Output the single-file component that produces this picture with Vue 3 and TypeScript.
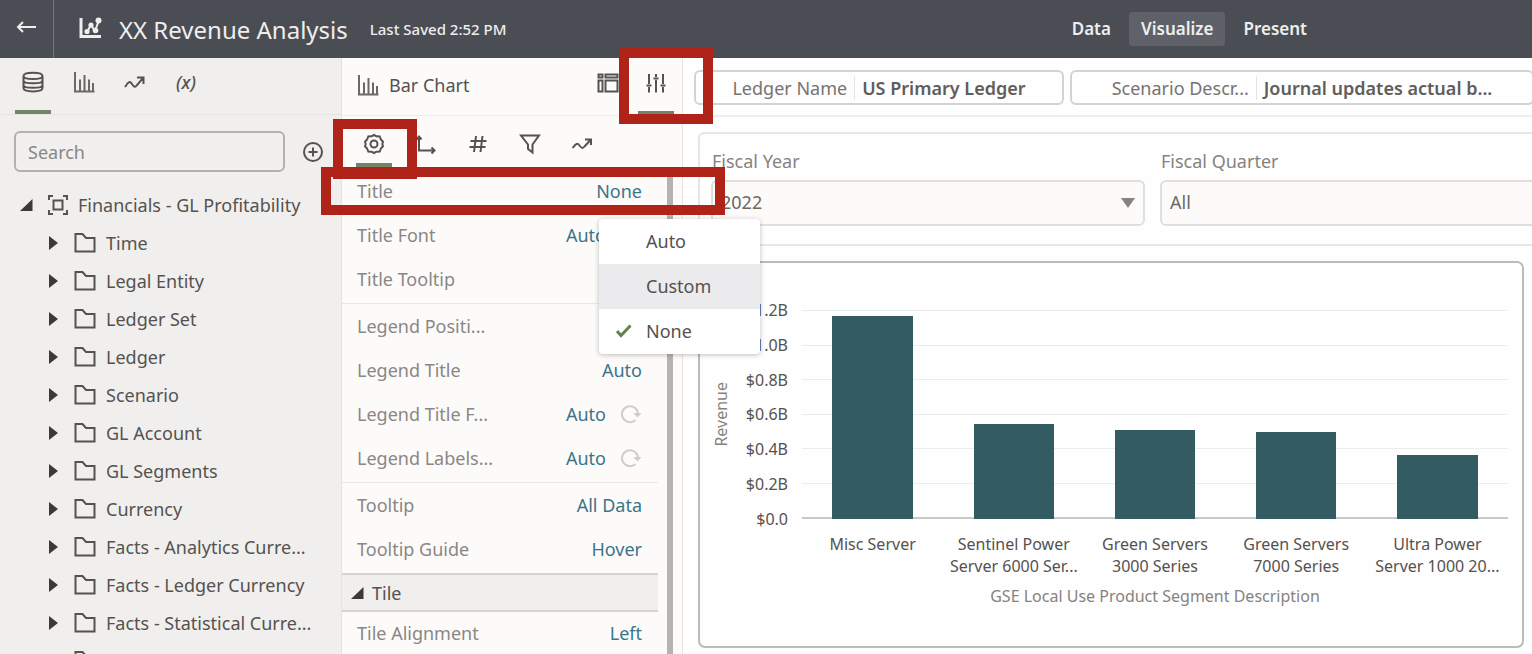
<script setup lang="ts">
import { ref } from 'vue'

interface Property {
  label: string
  value?: string
  reset?: boolean
}

interface Bar {
  name: string[]
  value: number
}

const folders: string[] = [
  'Time',
  'Legal Entity',
  'Ledger Set',
  'Ledger',
  'Scenario',
  'GL Account',
  'GL Segments',
  'Currency',
  'Facts - Analytics Curre...',
  'Facts - Ledger Currency',
  'Facts - Statistical Curre...',
  '',
]

const groups: Property[][] = [
  [
    { label: 'Title', value: 'None' },
    { label: 'Title Font', value: 'Auto', reset: true },
    { label: 'Title Tooltip' },
  ],
  [
    { label: 'Legend Positi...' },
    { label: 'Legend Title', value: 'Auto' },
    { label: 'Legend Title F...', value: 'Auto', reset: true },
    { label: 'Legend Labels...', value: 'Auto', reset: true },
  ],
  [
    { label: 'Tooltip', value: 'All Data' },
    { label: 'Tooltip Guide', value: 'Hover' },
  ],
]

const modes = ['Data', 'Visualize', 'Present']
const activeMode = ref('Visualize')
const titleOptions = ['Auto', 'Custom', 'None']
const titleChoice = ref('None')
const search = ref('')
const year = ref('2022')
const quarter = ref('All')

const ticks = ['$1.2B', '$1.0B', '$0.8B', '$0.6B', '$0.4B', '$0.2B', '$0.0']
const maxValue = 1.2
const bars: Bar[] = [
  { name: ['Misc Server'], value: 1.165 },
  { name: ['Sentinel Power', 'Server 6000 Ser...'], value: 0.548 },
  { name: ['Green Servers', '3000 Series'], value: 0.513 },
  { name: ['Green Servers', '7000 Series'], value: 0.499 },
  { name: ['Ultra Power', 'Server 1000 20...'], value: 0.37 },
]
const barHeight = (v: number) => `${(v / maxValue) * 100}%`
</script>

<template>
  <div class="app">
    <header class="topbar">
      <button class="back" aria-label="Back">
        <svg width="22" height="16" viewBox="0 0 22 16"><path d="M21 8H3M8 3L3 8l5 5" /></svg>
      </button>
      <svg class="logo" width="24" height="24" viewBox="0 0 24 24">
        <path d="M3 2v18.500h20" />
        <path class="link" d="M9 16l4-7 4 6 4-11" />
        <circle cx="9" cy="15.500" r="2.600" /><circle cx="13" cy="9" r="2.600" /><circle cx="17.500" cy="14.500" r="2.800" /><circle cx="20.500" cy="4.500" r="3" />
      </svg>
      <h1>XX Revenue Analysis</h1>
      <span class="saved">Last Saved 2:52 PM</span>
      <nav class="modes">
        <button v-for="m in modes" :key="m" :class="{ active: m === activeMode }" @click="activeMode = m">{{ m }}</button>
      </nav>
    </header>

    <main class="body">
      <aside class="data">
        <div class="tabs">
          <button class="tab on" aria-label="Data">
            <svg width="24" height="24" viewBox="0 0 24 24">
              <path d="M2.500 6c0-4.500 19-4.500 19 0v12c0 4.500-19 4.500-19 0zM2.500 6c0 4 19 4 19 0M2.500 10.500c0 3.800 19 3.800 19 0M2.500 15c0 3.800 19 3.800 19 0" />
            </svg>
          </button>
          <button class="tab" aria-label="Visualizations">
            <svg class="bars" width="24" height="24" viewBox="0 0 24 24"><path d="M3 2v19.500H22.500M8 21V9.500M12.500 21V5M17 21V9.500M21 21v-8" /></svg>
          </button>
          <button class="tab" aria-label="Analytics">
            <svg width="24" height="24" viewBox="0 0 24 24"><path d="M2 17c4-6 5-6 7-3s3 4 5 1l6-7M14 7.500h6.500V14" /></svg>
          </button>
          <button class="tab fx" aria-label="Parameters">(x)</button>
        </div>
        <div class="searchrow">
          <input v-model="search" type="text" placeholder="Search" aria-label="Search" />
          <button aria-label="Add">
            <svg width="22" height="22" viewBox="0 0 22 22"><circle cx="11" cy="11" r="9" /><path d="M6.500 11h9M11 6.500v9" /></svg>
          </button>
        </div>
        <ul class="tree">
          <li>
            <button class="root">
              <svg class="solid" width="14" height="14" viewBox="0 0 14 14"><path d="M12.500 1v12H0z" /></svg>
              <svg width="22" height="22" viewBox="0 0 22 22"><path d="M6.500 6.500h9v9h-9zM2 6V2h4M16 2h4v4M20 16v4h-4M6 20H2v-4" /></svg>
              <span>Financials - GL Profitability</span>
            </button>
          </li>
          <li v-for="f in folders" :key="f">
            <button>
              <svg class="solid" width="10" height="16" viewBox="0 0 10 16"><path d="M0 1l9 7-9 7z" /></svg>
              <svg width="22" height="22" viewBox="0 0 22 22"><path d="M1.500 19.500V2H8.500L12 6H20.500V19.500z" /></svg>
              <span v-if="f">{{ f }}</span>
            </button>
          </li>
        </ul>
      </aside>

      <section class="grammar">
        <div class="charttype">
          <svg class="bars" width="24" height="24" viewBox="0 0 24 24"><path d="M3 2v19.500H22.500M8 21V9.500M12.500 21V5M17 21V9.500M21 21v-8" /></svg>
          <h2>Bar Chart</h2>
          <button aria-label="Grammar">
            <svg width="24" height="24" viewBox="0 0 24 24"><path d="M2.500 3.500h4v3h-4zM9.500 3.500h12v3h-12zM2.500 9.500h4v11h-4zM9.500 9.500h12v11h-12z" /></svg>
          </button>
          <button class="on" aria-label="Properties">
            <svg width="24" height="24" viewBox="0 0 24 24"><path d="M5 3v10M5 16v5.500M12 3v3M12 9v12.500M19 3v10M19 16v5.500M2.500 14.500h5M9.500 7.500h5M16.500 14.500h5" /></svg>
          </button>
        </div>
        <div class="subtabs">
          <button class="on" aria-label="General">
            <svg width="24" height="24" viewBox="0 0 24 24">
              <path d="M12 3l2.500 1.300 3.200.2 1.200 3 2.100 2.200L20.300 12l.7 2.300-2.100 2.200-1.200 3-3.200.2L12 21l-2.500-1.300-3.200-.2-1.200-3L3 14.300 3.700 12 3 9.700l2.100-2.200 1.200-3 3.200-.2z" />
              <circle cx="12" cy="12" r="3.500" />
            </svg>
          </button>
          <button aria-label="Axis">
            <svg width="24" height="24" viewBox="0 0 24 24"><path d="M5 5v13.500h15M2.500 7.500L5 4.500l2.500 3M17.500 15.500l3 3-3 3" /></svg>
          </button>
          <button aria-label="Values">
            <svg width="24" height="24" viewBox="0 0 24 24"><path d="M10 4L8 20M16.500 4l-2 16M4.500 9h16M3.500 15h16" /></svg>
          </button>
          <button aria-label="Filters">
            <svg width="24" height="24" viewBox="0 0 24 24"><path d="M3 3.500h18l-6.500 9V20.500L10 17v-4.500z" /></svg>
          </button>
          <button aria-label="Analytics">
            <svg width="24" height="24" viewBox="0 0 24 24"><path d="M2.500 16c4-5 5-5 7-2.500s3 3.500 5 1L20.500 8M15 7.500h6V13" /></svg>
          </button>
        </div>
        <div class="scroll">
          <div class="props">
            <div v-for="(g, i) in groups" :key="i" class="group">
              <div v-for="p in g" :key="p.label" class="prop">
                <span>{{ p.label }}</span>
                <button v-if="p.value" class="value">{{ p.value }}</button>
                <button v-if="p.reset" class="reset" aria-label="Reset">
                  <svg width="22" height="20" viewBox="0 0 22 20"><path d="M15.500 16A8 8 0 1 1 18 10" /><path class="tip" d="M13.500 9h8L17.500 13.500z" /></svg>
                </button>
              </div>
            </div>
            <button class="section">
              <svg class="solid" width="14" height="14" viewBox="0 0 14 14"><path d="M12.500 1v12H0z" /></svg>Tile
            </button>
            <div class="prop"><span>Tile Alignment</span><button class="value">Left</button></div>
          </div>
          <div class="bar"></div>
        </div>
      </section>

      <section class="canvas">
        <div class="chips">
          <button class="chip"><span>Ledger Name</span><strong>US Primary Ledger</strong></button>
          <button class="chip wide"><span>Scenario Descr...</span><strong>Journal updates actual b...</strong></button>
        </div>
        <div class="filters">
          <div class="field">
            <label for="year">Fiscal Year</label>
            <div class="pick">
              <select id="year" v-model="year"><option>2022</option></select>
              <svg class="solid" width="14" height="10" viewBox="0 0 14 10"><path d="M0 0h14L7 10z" /></svg>
            </div>
          </div>
          <div class="field">
            <label for="quarter">Fiscal Quarter</label>
            <div class="pick">
              <select id="quarter" v-model="quarter"><option>All</option></select>
              <svg class="solid" width="14" height="10" viewBox="0 0 14 10"><path d="M0 0h14L7 10z" /></svg>
            </div>
          </div>
        </div>
        <figure class="chart">
          <div class="ytitle"><span>Revenue</span></div>
          <div class="ticks"><span v-for="t in ticks" :key="t">{{ t }}</span></div>
          <div class="plot">
            <div class="lines"><i v-for="t in ticks" :key="t"></i></div>
            <div v-for="(b, i) in bars" :key="i" class="slot"><div class="column" :style="{ height: barHeight(b.value) }"></div></div>
          </div>
          <div class="names">
            <div v-for="(b, i) in bars" :key="i"><div v-for="n in b.name" :key="n">{{ n }}</div></div>
          </div>
          <figcaption>GSE Local Use Product Segment Description</figcaption>
        </figure>
      </section>
    </main>

    <ul class="menu" role="menu">
      <li v-for="o in titleOptions" :key="o" role="none">
        <button role="menuitem" :class="{ hover: o === 'Custom' }" @click="titleChoice = o">
          <svg v-if="o === titleChoice" width="16" height="14" viewBox="0 0 16 14"><path d="M1 7l4 4.500L14.500 1.500" /></svg>
          <span>{{ o }}</span>
        </button>
      </li>
    </ul>

    <div class="mark mark-properties"></div>
    <div class="mark mark-general"></div>
    <div class="mark mark-title"></div>
  </div>
</template>

<style>
body {
  margin: 0;
  overflow: hidden;
}
</style>

<style scoped>
.app {
  position: relative;
  display: flex;
  flex-direction: column;
  height: 100vh;
  overflow: hidden;
  font-family: 'Noto Sans', 'Open Sans', sans-serif;
  font-size: 18px;
  color: #55524f;
  background: #fefefe;
}
* {
  box-sizing: border-box;
}
button {
  font: inherit;
  color: inherit;
  background: none;
  border: 0;
  padding: 0;
  display: flex;
  align-items: center;
}
ul,
h1,
h2,
figure {
  margin: 0;
  padding: 0;
  list-style: none;
}
svg {
  flex: none;
  fill: none;
  stroke: #55524f;
  stroke-width: 2;
}
svg.solid {
  fill: #3c3a38;
  stroke: none;
}
svg.bars {
  stroke: #6b6865;
}

/* top bar */
.topbar {
  display: flex;
  align-items: center;
  flex: none;
  height: 58px;
  background: #4a4d54;
  color: #eeeeee;
}
.topbar svg {
  stroke: #eeeeee;
}
.back {
  width: 54px;
  height: 100%;
  padding: 0 2px 4px 0;
  justify-content: center;
  border-right: 1px solid #75777c;
}
.topbar .logo {
  margin: 0 17px 2px 24px;
  stroke-width: 3;
}
.logo .link {
  stroke-width: 2;
}
.logo circle {
  fill: #eeeeee;
  stroke: none;
}
h1 {
  font-size: 24px;
  font-weight: 400;
}
.saved {
  margin-left: 22px;
  font-size: 15px;
  font-weight: 500;
}
.modes {
  display: flex;
  margin-left: auto;
  margin-right: 213px;
  gap: 6px;
  font-size: 17px;
  font-weight: 600;
}
.modes button {
  height: 34px;
  padding: 0 12px 2px;
  border-radius: 4px;
}
.modes .active {
  background: #5e6167;
}

.body {
  display: flex;
  flex: 1;
  min-height: 0;
}

/* data panel */
.data {
  flex: none;
  width: 342px;
  background: #f0efed;
  border-right: 1px solid #e4e3e1;
  overflow: hidden;
}
.tabs {
  display: flex;
  gap: 15px;
  height: 57px;
  padding-left: 15px;
  border-bottom: 1px solid #e6e5e3;
}
.tab {
  width: 36px;
  padding-bottom: 4px;
  justify-content: center;
  border-bottom: 4px solid transparent;
}
.on {
  border-bottom-color: #728566 !important;
}
.fx {
  font-style: italic;
  font-weight: 500;
}
.searchrow {
  display: flex;
  gap: 17px;
  padding: 16px 17px 14px 14px;
}
.searchrow input {
  flex: 1;
  min-width: 0;
  height: 41px;
  padding: 0 12px;
  font: inherit;
  color: #55524f;
  background: #f1f0ee;
  border: 2px solid #b3b1ae;
  border-radius: 6px;
}
.searchrow input::placeholder {
  color: #8a8784;
}
.tree button {
  height: 38px;
  padding-left: 49px;
  white-space: nowrap;
}
.tree svg + svg {
  margin: 0 10px 0 15px;
}
.tree .root {
  padding-left: 20px;
}
.tree .root svg + svg {
  margin: 0 9px 0 13px;
}

/* grammar panel */
.grammar {
  display: flex;
  flex-direction: column;
  flex: none;
  width: 341px;
  background: #fcfbfa;
  border-right: 1px solid #e6e5e3;
}
.charttype {
  display: flex;
  align-items: center;
  height: 58px;
  padding: 0 8px 0 14px;
  border-bottom: 1px solid #eeedeb;
}
.charttype > svg {
  margin-bottom: 3px;
}
h2 {
  margin: 0 0 3px 9px;
  flex: 1;
  font-size: 18px;
  font-weight: 400;
}
.charttype button {
  width: 36px;
  height: 57px;
  padding-bottom: 4px;
  justify-content: center;
  border-bottom: 4px solid transparent;
}
.charttype button + button {
  margin-left: 12px;
}
.subtabs {
  display: flex;
  gap: 16px;
  height: 54px;
  padding-left: 14px;
}
.subtabs button {
  width: 36px;
  height: 51px;
  justify-content: center;
  padding-top: 9px;
  border-bottom: 4px solid transparent;
}
.scroll {
  display: flex;
  justify-content: space-between;
  flex: 1;
  min-height: 0;
  overflow: hidden;
  padding-right: 9px;
}
.props {
  width: 316px;
}
.group {
  padding-bottom: 1px;
  border-bottom: 1px solid #e8e7e5;
}
.group + .group {
  padding-top: 1px;
}
.group:nth-child(3) {
  border-bottom: 0;
}
.prop {
  display: flex;
  align-items: center;
  height: 44px;
  padding: 0 16px 2px 15px;
  color: #8a8784;
}
.prop span {
  flex: 1;
}
.value {
  color: #3b7588;
}
.reset {
  width: 36px;
  justify-content: flex-end;
}
.reset svg {
  stroke: #cfcdcb;
}
.reset .tip {
  fill: #cfcdcb;
  stroke: none;
}
.section {
  width: 100%;
  height: 39px;
  gap: 7px;
  padding-left: 9px;
  background: #f0efed;
  border-top: 2px solid #d6d4d1;
  border-bottom: 2px solid #d6d4d1;
}
.bar {
  width: 6px;
  background: #b7b2ae;
}

/* canvas */
.canvas {
  display: flex;
  flex-direction: column;
  flex: 1;
  min-width: 0;
  overflow: hidden;
}
.chips {
  display: flex;
  flex: none;
  gap: 6px;
  height: 59px;
  padding: 12px 0 0 11px;
  border-bottom: 2px solid #eeeeee;
}
.chip {
  flex: none;
  width: 370px;
  height: 35px;
  justify-content: center;
  border: 2px solid #d4d3d1;
  border-radius: 6px;
  color: #767371;
  white-space: nowrap;
}
.chip.wide {
  width: 464px;
}
.chip strong {
  margin-left: 7px;
  padding-left: 7px;
  font-weight: 600;
  color: #605d5a;
  border-left: 1px solid #e4e4e4;
}
.filters {
  display: flex;
  flex: none;
  gap: 15px;
  width: max-content;
  margin: 15px 0 0 15px;
  height: 114px;
  padding: 15px 11px;
  border: 2px solid #e6e6e5;
  border-radius: 6px;
}
.field {
  width: 434px;
}
.field label {
  display: block;
  height: 31px;
  line-height: 24px;
  padding-left: 1px;
  color: #86837f;
}
.pick {
  display: flex;
  align-items: center;
}
.pick select {
  appearance: none;
  width: 100%;
  height: 46px;
  padding: 0 8px 2px;
  font: inherit;
  color: #6b6865;
  background: #fcfbfa;
  border: 2px solid #e0dfde;
  border-radius: 6px;
}
.pick svg {
  margin-left: -24px;
  margin-right: 10px;
  fill: #86837f;
  pointer-events: none;
}

/* chart */
.chart {
  display: grid;
  grid-template-columns: 28px 50px minmax(0, 1fr);
  grid-template-rows: 209px auto auto;
  align-content: start;
  flex: 1;
  margin: 15px 8px 6px 15px;
  padding: 47px 14px 0 10px;
  border: 2px solid #b9bdb2;
  border-radius: 7px;
  font-size: 16px;
}
.ytitle {
  display: flex;
  align-items: center;
  color: #86837f;
}
.ytitle span {
  writing-mode: vertical-rl;
  transform: rotate(180deg);
}
.ticks {
  display: flex;
  flex-direction: column;
  justify-content: space-between;
  margin: -10px 0;
  text-align: right;
  line-height: 20px;
}
.plot {
  position: relative;
  display: flex;
  margin-left: 14px;
}
.lines {
  position: absolute;
  inset: 0;
  display: flex;
  flex-direction: column;
  justify-content: space-between;
}
.lines i {
  height: 1px;
  background: #ececec;
}
.lines i:last-child {
  height: 2px;
  background: #c8c8c8;
}
.slot {
  display: flex;
  flex: 1;
  justify-content: center;
  align-items: flex-end;
}
.column {
  position: relative;
  width: 57%;
  background: #335c62;
}
.names {
  grid-column: 3;
  display: flex;
  margin-left: 14px;
  padding-top: 14px;
  line-height: 22px;
  text-align: center;
  white-space: nowrap;
}
.names > div {
  flex: 1;
}
figcaption {
  grid-column: 3;
  margin-left: 14px;
  padding-top: 8px;
  line-height: 22px;
  text-align: center;
  color: #86837f;
}

/* title menu and highlights */
.menu {
  position: absolute;
  left: 599px;
  top: 219px;
  width: 161px;
  background: #ffffff;
  border-radius: 4px;
  box-shadow: 0 1px 5px rgba(0, 0, 0, 0.25);
  overflow: hidden;
}
.menu button {
  width: 100%;
  height: 45px;
  padding: 0 0 2px 17px;
}
.menu .hover {
  background: #ebebed;
}
.menu span {
  margin-left: 14px;
}
.menu span:first-child {
  margin-left: 30px;
}
.menu svg {
  stroke: #66804f;
  stroke-width: 3;
}
.mark {
  position: absolute;
  border: 10px solid #b02318;
  pointer-events: none;
}
.mark-properties {
  left: 619px;
  top: 47px;
  width: 94px;
  height: 77px;
}
.mark-general {
  left: 333px;
  top: 119px;
  width: 84px;
  height: 60px;
}
.mark-title {
  left: 321px;
  top: 167px;
  width: 404px;
  height: 48px;
}
</style>
